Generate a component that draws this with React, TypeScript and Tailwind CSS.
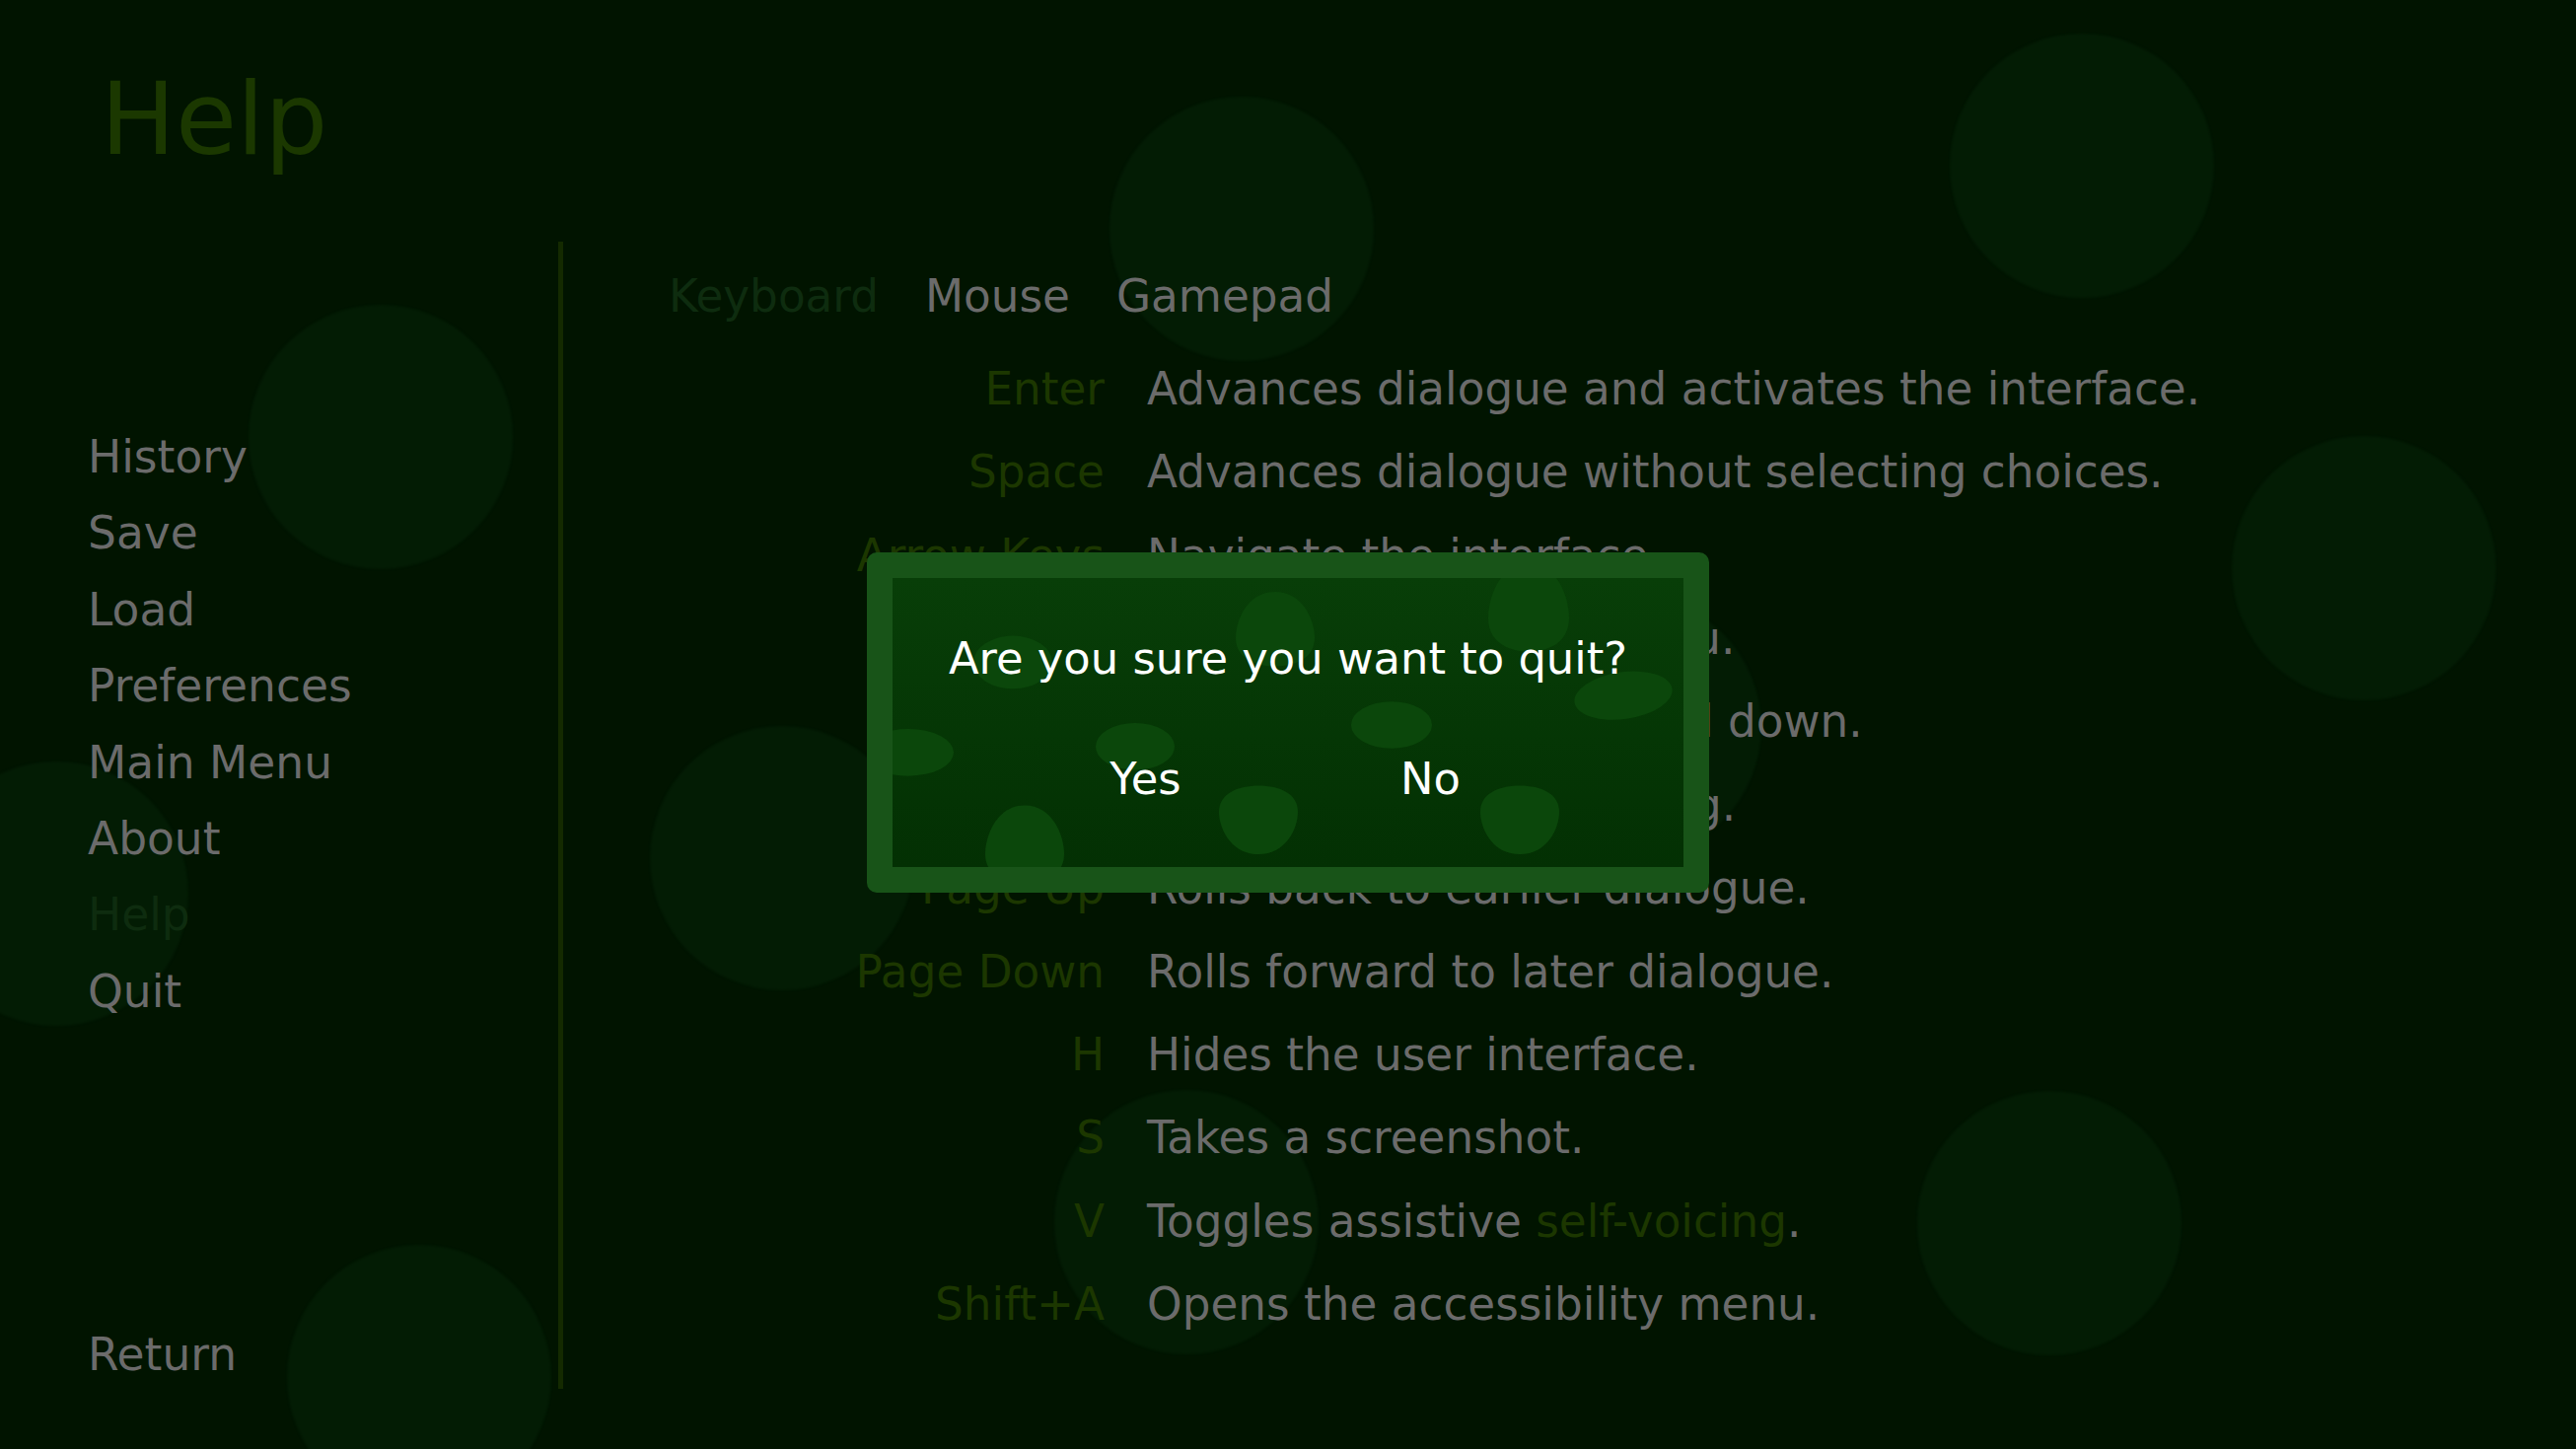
const NAV = ['History', 'Save', 'Load', 'Preferences', 'Main Menu', 'About', 'Help', 'Quit'];

const KEYS: { key: string; text: React.ReactNode }[] = [
  { key: 'Enter', text: 'Advances dialogue and activates the interface.' },
  { key: 'Space', text: 'Advances dialogue without selecting choices.' },
  { key: 'Arrow Keys', text: 'Navigate the interface.' },
  { key: 'Escape', text: 'Accesses the game menu.' },
  { key: 'Ctrl', text: 'Skips dialogue while held down.' },
  { key: 'Tab', text: 'Toggles dialogue skipping.' },
  { key: 'Page Up', text: 'Rolls back to earlier dialogue.' },
  { key: 'Page Down', text: 'Rolls forward to later dialogue.' },
  { key: 'H', text: 'Hides the user interface.' },
  { key: 'S', text: 'Takes a screenshot.' },
  {
    key: 'V',
    text: (
      <>
        Toggles assistive <span className="text-[#1c3700]">self-voicing</span>.
      </>
    ),
  },
  { key: 'Shift+A', text: 'Opens the accessibility menu.' },
];

// faint spots scattered over the menu background
const SPOTS = [
  'left-[1125px] top-[98px]',
  'left-[1977px] top-[34px]',
  'left-[252px] top-[309px]',
  'left-[2263px] top-[442px]',
  'left-[659px] top-[736px]',
  'left-[-77px] top-[772px]',
  'left-[1518px] top-[603px]',
  'left-[1069px] top-[1105px]',
  'left-[1944px] top-[1106px]',
  'left-[291px] top-[1262px]',
];

// egg outline, narrow end on top (flip = narrow end at the bottom)
function egg(cx: number, cy: number, w: number, h: number, flip = false) {
  const r = w / 2;
  const s = flip ? -1 : 1;
  const top = cy - (s * h) / 2;
  const bottom = cy + (s * h) / 2;
  const y = (f: number) => cy + s * f * h;
  return [
    `M ${cx} ${top}`,
    `C ${cx + 0.7 * r} ${top} ${cx + r} ${y(-0.12)} ${cx + r} ${y(0.12)}`,
    `C ${cx + r} ${y(0.38)} ${cx + 0.55 * r} ${bottom} ${cx} ${bottom}`,
    `C ${cx - 0.55 * r} ${bottom} ${cx - r} ${y(0.38)} ${cx - r} ${y(0.12)}`,
    `C ${cx - r} ${y(-0.12)} ${cx - 0.7 * r} ${top} ${cx} ${top} Z`,
  ].join(' ');
}

function FramePattern() {
  return (
    <svg className="absolute inset-0 h-full w-full" viewBox="0 0 802 295" preserveAspectRatio="none">
      <g fill="#0b470b">
        <path d={egg(388, 52, 80, 76)} />
        <path d={egg(645, 30, 82, 90)} />
        <ellipse cx="122" cy="86" rx="40" ry="27" />
        <ellipse cx="16" cy="178" rx="46" ry="24" />
        <ellipse cx="246" cy="172" rx="40" ry="24" />
        <ellipse cx="506" cy="150" rx="41" ry="24" />
        <ellipse cx="741" cy="120" rx="50" ry="24" transform="rotate(-8 741 120)" />
        <path d={egg(134, 272, 80, 80)} />
        <path d={egg(371, 247, 80, 70, true)} />
        <path d={egg(636, 247, 80, 70, true)} />
      </g>
    </svg>
  );
}

function ConfirmQuit() {
  return (
    <div className="absolute left-[879px] top-[560px] h-[345px] w-[854px] rounded-[10px] bg-[#185418] p-[26px]">
      <div className="relative h-full overflow-hidden bg-gradient-to-b from-[#083e08] to-[#033003]">
        <FramePattern />
        <div className="relative flex flex-col items-center pt-[52px] text-[44.8px] leading-[60px] text-white">
          <p>Are you sure you want to quit?</p>
          <div className="mt-[62px] flex gap-[129px]">
            <button className="w-[160px] text-center">Yes</button>
            <button className="w-[160px] text-center">No</button>
          </div>
        </div>
      </div>
    </div>
  );
}

export default function App() {
  return (
    <div className="relative h-[1469px] w-[2612px] overflow-hidden bg-[#011400] font-['DejaVu_Sans',sans-serif] text-[#6b6b6b]">
      {SPOTS.map((pos) => (
        <div key={pos} className={`absolute h-[268px] w-[268px] rounded-full bg-[#031c04] blur-[1px] ${pos}`} />
      ))}

      <div className="relative">
        <h1 className="pl-[102px] pt-[61px] text-[101px] leading-[120px] text-[#1b3800]">Help</h1>

        <div className="flex">
          <nav className="flex w-[566px] flex-col pl-[89px] pt-[244px] text-[45.5px] leading-[77.4px]">
            {NAV.map((item) => (
              <a key={item} className={item === 'Help' ? 'text-[#0e2c0f]' : ''}>
                {item}
              </a>
            ))}
            <a className="mt-[291px]">Return</a>
          </nav>

          <div className="mt-[64px] h-[1163px] w-[5px] bg-[#142a00]" />

          <section className="flex flex-col pt-[90px] text-[45.3px]">
            <div className="flex gap-[47px] pl-[107px] leading-[60px]">
              <span className="text-[#0e2c0f]">Keyboard</span>
              <span>Mouse</span>
              <span>Gamepad</span>
            </div>
            <div className="mt-[22px] flex flex-col leading-[84.36px]">
              {KEYS.map((row) => (
                <div key={row.key} className="flex">
                  <span className="w-[549px] text-right text-[#1c3700]">{row.key}</span>
                  <span className="ml-[43px]">{row.text}</span>
                </div>
              ))}
            </div>
          </section>
        </div>
      </div>

      <ConfirmQuit />
    </div>
  );
}
